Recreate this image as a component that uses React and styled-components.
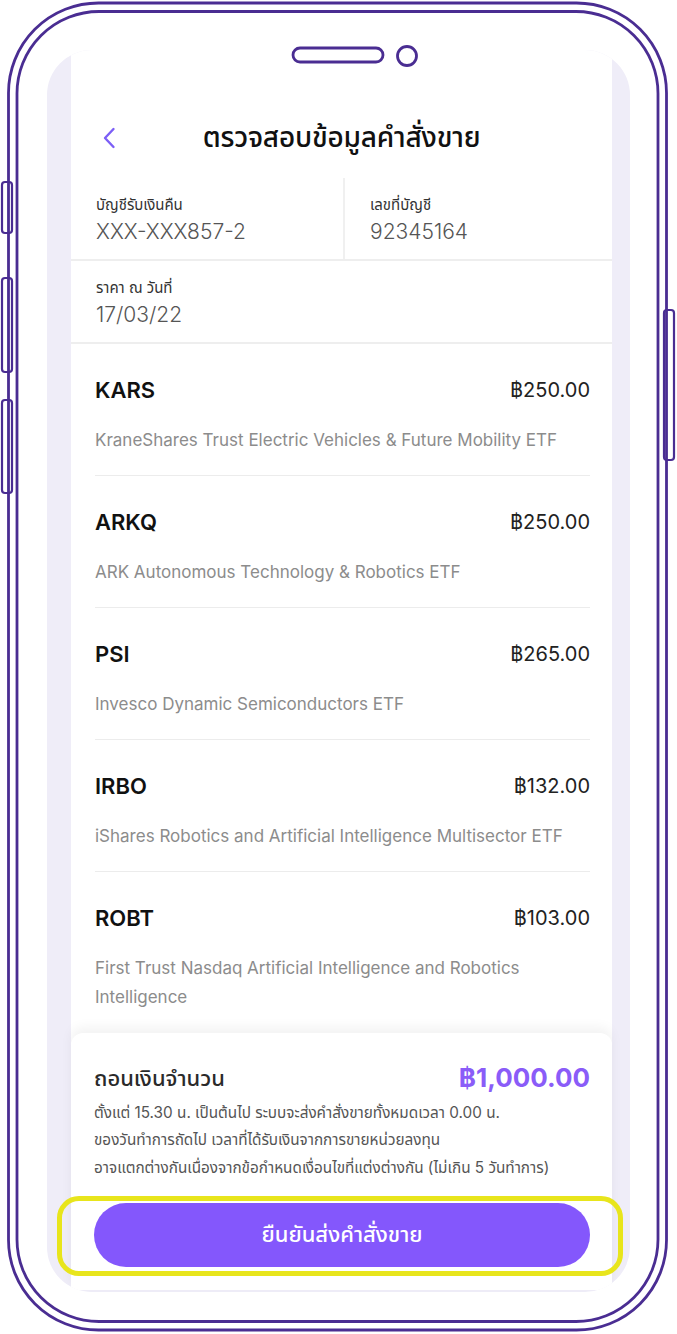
import React from 'react';
import styled, { createGlobalStyle } from 'styled-components';

const GlobalStyle = createGlobalStyle`
  html, body {
    margin: 0;
    padding: 0;
    background: #fff;
  }
  body {
    font-family: "Inter", "Noto Sans Thai", "Noto Sans", sans-serif;
    -webkit-font-smoothing: antialiased;
  }
  * {
    box-sizing: border-box;
  }
`;

const Page = styled.div`
  position: relative;
  width: 677px;
  height: 1334px;
  padding: 50px 47px 42px 47px;
  background: #fff;
  overflow: hidden;
`;

const FrameArt = styled.svg`
  position: absolute;
  left: 0;
  top: 0;
  z-index: 2;
  pointer-events: none;
`;

const Screen = styled.div`
  height: 100%;
  background: #efedf8;
  border-radius: 45px;
  overflow: hidden;
  padding: 0 18px 2px 24px;
  display: flex;
`;

const Column = styled.div`
  flex: 1;
  background: #fff;
  display: flex;
  flex-direction: column;
`;

const Header = styled.header`
  display: grid;
  grid-template-columns: 1fr auto 1fr;
  align-items: center;
  height: 128px;
  padding-top: 48px;
`;

const Back = styled.button`
  justify-self: start;
  display: flex;
  align-items: center;
  margin-left: 31px;
  padding: 0;
  border: 0;
  background: none;
  cursor: pointer;
`;

const Title = styled.h1`
  margin: 0;
  font-size: 28px;
  font-weight: 500;
  color: #111;
  letter-spacing: -0.2px;
`;

const InfoRow = styled.div`
  display: grid;
  grid-template-columns: ${p => (p.$split ? '272px 1fr' : '1fr')};
  border-bottom: 2px solid #eeeeee;
`;

const InfoCell = styled.div`
  display: flex;
  flex-direction: column;
  gap: 4px;
  padding: 17px 0 14px 25px;
  & + & {
    border-left: 2px solid #f0f0f0;
  }
`;

const InfoLabel = styled.span`
  font-size: 15px;
  line-height: 20px;
  color: #333;
`;

const InfoValue = styled.span`
  font-size: 21px;
  line-height: 26px;
  font-weight: 300;
  color: #555;
`;

const List = styled.div`
  flex: 1;
  padding: 0 22px 0 24px;
`;

const Item = styled.div`
  padding: 31px 0 20px;
  border-bottom: ${p => (p.$last ? 'none' : '1px solid #ececec')};
`;

const ItemTop = styled.div`
  display: flex;
  justify-content: space-between;
  align-items: center;
  line-height: 30px;
`;

const Symbol = styled.span`
  font-size: 22px;
  font-weight: 600;
  color: #111;
`;

const Price = styled.span`
  font-size: 20px;
  color: #222;
`;

const FundName = styled.p`
  margin: 21px 0 0;
  font-size: 17px;
  line-height: 29px;
  color: #8c8c8c;
  padding-right: 20px;
`;

const Summary = styled.div`
  padding: 28px 22px 23px 23px;
  border-radius: 12px 12px 0 0;
  background: #fff;
  box-shadow: 0 -6px 12px rgba(0, 0, 0, 0.05);
`;

const SummaryTop = styled.div`
  display: flex;
  justify-content: space-between;
  align-items: center;
  line-height: 34px;
`;

const SummaryLabel = styled.span`
  font-size: 22px;
  font-weight: 500;
  color: #2a2a2a;
`;

const Amount = styled.span`
  font-size: 26px;
  font-weight: 700;
  color: #8a5cf8;
`;

const Note = styled.p`
  margin: 4px 0 0;
  font-size: 15.3px;
  line-height: 27.5px;
  color: #555;
  white-space: pre-line;
`;

const ButtonWrap = styled.div`
  position: relative;
  margin-top: 22px;
`;

const Confirm = styled.button`
  width: 100%;
  height: 64px;
  border: 0;
  border-radius: 32px;
  background: #8457fc;
  color: #fff;
  font-family: inherit;
  font-size: 22px;
  font-weight: 500;
  cursor: pointer;
`;

const Highlight = styled.span`
  position: absolute;
  top: -7px;
  bottom: -9px;
  left: -37px;
  right: -33px;
  border: 5px solid #e8e51c;
  border-radius: 22px;
  pointer-events: none;
`;

const funds = [
  { symbol: 'KARS', price: '฿250.00', name: 'KraneShares Trust Electric Vehicles & Future Mobility ETF' },
  { symbol: 'ARKQ', price: '฿250.00', name: 'ARK Autonomous Technology & Robotics ETF' },
  { symbol: 'PSI', price: '฿265.00', name: 'Invesco Dynamic Semiconductors ETF' },
  { symbol: 'IRBO', price: '฿132.00', name: 'iShares Robotics and Artificial Intelligence Multisector ETF' },
  { symbol: 'ROBT', price: '฿103.00', name: 'First Trust Nasdaq Artificial Intelligence and Robotics Intelligence' },
];

function PhoneFrame() {
  const ink = '#4a2d92';
  return (
    <FrameArt width="677" height="1334" viewBox="0 0 677 1334">
      {/* side buttons */}
      <g fill="#fff" stroke={ink} strokeWidth="2.2">
        <rect x="2" y="182" width="10" height="51" rx="3" />
        <rect x="2" y="278" width="10" height="94" rx="3" />
        <rect x="2" y="400" width="10" height="93" rx="3" />
        <rect x="664" y="310" width="10" height="150" rx="3" />
      </g>
      <g fill="none" stroke={ink} strokeWidth="2.8">
        <rect x="8.5" y="3" width="658" height="1327" rx="90" />
        <rect x="17" y="11.5" width="641" height="1310" rx="82" />
        <rect x="293" y="48" width="90" height="14" rx="7" />
        <circle cx="407" cy="56" r="9.5" />
      </g>
    </FrameArt>
  );
}

export default function App() {
  return (
    <>
      <GlobalStyle />
      <Page>
        <PhoneFrame />
        <Screen>
          <Column>
            <Header>
              <Back aria-label="back">
                <svg width="14" height="22" viewBox="0 0 14 22">
                  <path d="M11.5 2 L3 11 L11.5 20" fill="none" stroke="#7c5ff6" strokeWidth="2.4" strokeLinecap="round" strokeLinejoin="round" />
                </svg>
              </Back>
              <Title>ตรวจสอบข้อมูลคำสั่งขาย</Title>
            </Header>

            <InfoRow $split>
              <InfoCell>
                <InfoLabel>บัญชีรับเงินคืน</InfoLabel>
                <InfoValue>XXX-XXX857-2</InfoValue>
              </InfoCell>
              <InfoCell>
                <InfoLabel>เลขที่บัญชี</InfoLabel>
                <InfoValue>92345164</InfoValue>
              </InfoCell>
            </InfoRow>
            <InfoRow>
              <InfoCell>
                <InfoLabel>ราคา ณ วันที่</InfoLabel>
                <InfoValue>17/03/22</InfoValue>
              </InfoCell>
            </InfoRow>

            <List>
              {funds.map((f, i) => (
                <Item key={f.symbol} $last={i === funds.length - 1}>
                  <ItemTop>
                    <Symbol>{f.symbol}</Symbol>
                    <Price>{f.price}</Price>
                  </ItemTop>
                  <FundName>{f.name}</FundName>
                </Item>
              ))}
            </List>

            <Summary>
              <SummaryTop>
                <SummaryLabel>ถอนเงินจำนวน</SummaryLabel>
                <Amount>฿1,000.00</Amount>
              </SummaryTop>
              <Note>
                {'ตั้งแต่ 15.30 น. เป็นต้นไป ระบบจะส่งคำสั่งขายทั้งหมดเวลา 0.00 น.\nของวันทำการถัดไป เวลาที่ได้รับเงินจากการขายหน่วยลงทุน\nอาจแตกต่างกันเนื่องจากข้อกำหนดเงื่อนไขที่แต่งต่างกัน (ไม่เกิน 5 วันทำการ)'}
              </Note>
              <ButtonWrap>
                <Confirm>ยืนยันส่งคำสั่งขาย</Confirm>
                <Highlight />
              </ButtonWrap>
            </Summary>
          </Column>
        </Screen>
      </Page>
    </>
  );
}
